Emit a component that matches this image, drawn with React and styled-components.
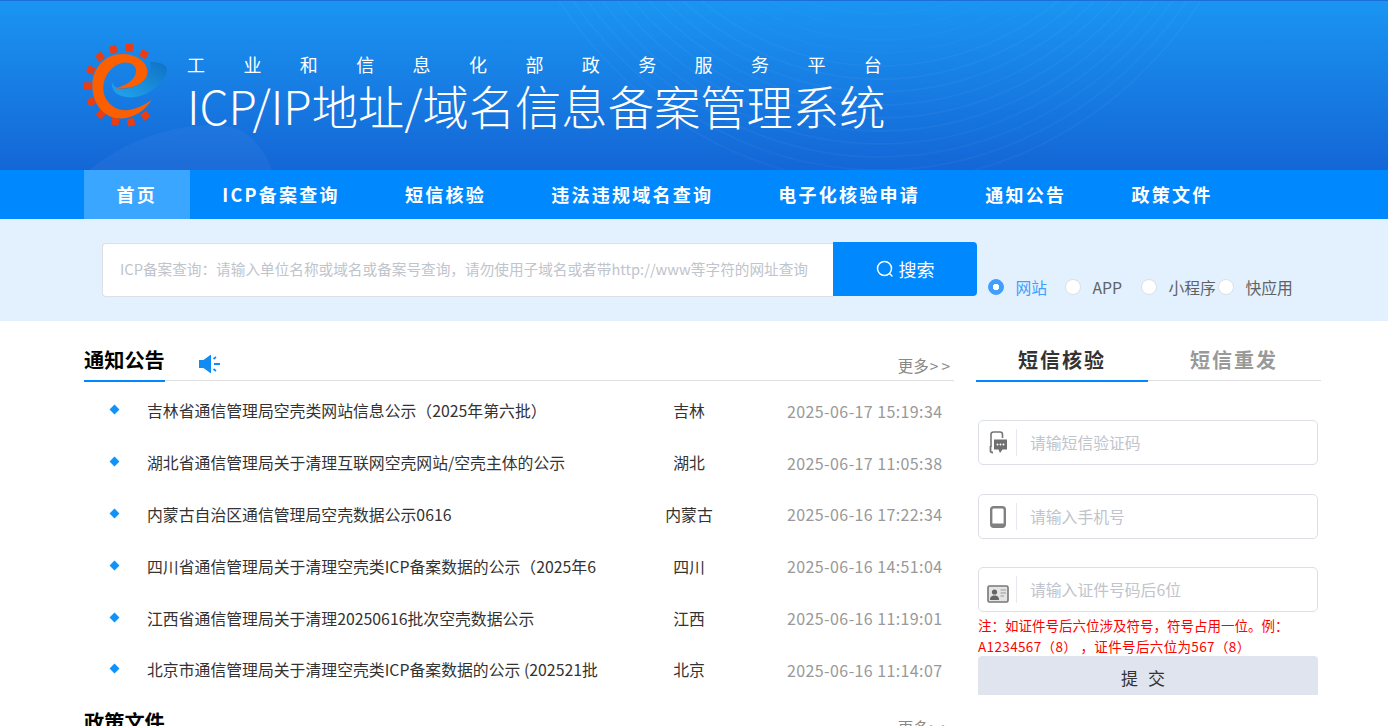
import React from "react";
import styled, { createGlobalStyle } from "styled-components";

const FONT = `"Noto Sans CJK SC", "Noto Sans", "Liberation Sans", sans-serif`;

const GlobalStyle = createGlobalStyle`
  html, body {
    margin: 0;
    height: 726px;
    overflow: hidden;
    background: #fff;
    font-family: ${FONT};
  }
  * { box-sizing: border-box; }
`;

const navItems = ["首页", "ICP备案查询", "短信核验", "违法违规域名查询", "电子化核验申请", "通知公告", "政策文件"];

const notices = [
  { title: "吉林省通信管理局空壳类网站信息公示（2025年第六批）", region: "吉林", date: "2025-06-17 15:19:34" },
  { title: "湖北省通信管理局关于清理互联网空壳网站/空壳主体的公示", region: "湖北", date: "2025-06-17 11:05:38" },
  { title: "内蒙古自治区通信管理局空壳数据公示0616", region: "内蒙古", date: "2025-06-16 17:22:34" },
  { title: "四川省通信管理局关于清理空壳类ICP备案数据的公示（2025年6", region: "四川", date: "2025-06-16 14:51:04" },
  { title: "江西省通信管理局关于清理20250616批次空壳数据公示", region: "江西", date: "2025-06-16 11:19:01" },
  { title: "北京市通信管理局关于清理空壳类ICP备案数据的公示 (202521批", region: "北京", date: "2025-06-16 11:14:07" },
];

const radios = [
  { label: "网站", width: 77, checked: true },
  { label: "APP", width: 76 },
  { label: "小程序", width: 77 },
  { label: "快应用", width: 80 },
];

const gearTeeth = [
  [160, 88, -15], [208, 83, 5], [252, 103, 28], [120, 110, -35], [92, 150, -65], [82, 198, 90],
  [94, 245, 68], [123, 283, 40], [166, 305, 12], [213, 307, -10], [256, 287, -32],
];

const Page = styled.div`
  width: 1388px;
  height: 726px;
  overflow: hidden;
`;

const Banner = styled.header`
  position: relative;
  height: 170px;
  padding: 44px 0 0 84px;
  display: flex;
  overflow: hidden;
  border-top: 1px solid #1b6fdc;
  background: linear-gradient(180deg, #1a95f2 0%, #1466d6 100%);
`;

const BannerArt = styled.svg`
  position: absolute;
  left: 0;
  top: 0;
`;

const LogoMark = styled.svg`
  position: relative;
  flex: none;
  margin-top: -1px;
`;

const BannerText = styled.div`
  position: relative;
  margin-left: 19px;
  color: #fff;
`;

const Kicker = styled.div`
  margin-top: 6px;
  font-size: 18px;
  line-height: 26px;
  letter-spacing: 38.4px;
  white-space: nowrap;
`;

const SiteTitle = styled.h1`
  margin: 0;
  font-size: 46.3px;
  font-weight: 300;
  line-height: 56px;
  white-space: nowrap;
`;

const NavBar = styled.nav`
  height: 49px;
  padding-left: 84px;
  display: flex;
  background: #0088ff;
`;

const NavItem = styled.a`
  padding: 0 32.6px;
  font-size: 18px;
  font-weight: 700;
  line-height: 49px;
  letter-spacing: 2.25px;
  color: #fff;
  white-space: nowrap;
  background: ${(p) => (p.$active ? "#3ba6ff" : "transparent")};
`;

const SearchBand = styled.section`
  height: 102px;
  padding: 23px 0 0 102px;
  display: flex;
  background: #e3f1fe;
`;

const SearchInput = styled.div`
  width: 731px;
  height: 54px;
  margin-top: 1px;
  padding-left: 17px;
  font-size: 14.65px;
  line-height: 50px;
  color: #c0c4cc;
  white-space: nowrap;
  background: #fff;
  border: 1px solid #dcdfe6;
  border-right: 0;
  border-radius: 4px 0 0 4px;
`;

const SearchButton = styled.button`
  width: 144px;
  height: 54px;
  padding: 0;
  display: flex;
  align-items: center;
  justify-content: center;
  gap: 5px;
  font-family: inherit;
  font-size: 18px;
  color: #fff;
  background: #0088ff;
  border: 0;
  border-radius: 0 4px 4px 0;
`;

const RadioGroup = styled.div`
  height: 30px;
  margin: 30px 0 0 11px;
  display: flex;
  align-items: center;
`;

const RadioOption = styled.label`
  display: flex;
  align-items: center;
  gap: 11.5px;
  font-size: 15.8px;
  color: ${(p) => (p.$checked ? "#409eff" : "#606266")};
  white-space: nowrap;
`;

const RadioDot = styled.span`
  width: 16px;
  height: 16px;
  flex: none;
  border-radius: 50%;
  border: 1px solid ${(p) => (p.$checked ? "#409eff" : "#dcdfe6")};
  background: ${(p) => (p.$checked
    ? "radial-gradient(circle, #fff 0 3px, #409eff 3.5px)"
    : "#fff")};
`;

const Content = styled.main`
  padding: 26px 0 0 84px;
  display: flex;
  gap: 22px;
`;

const LeftColumn = styled.div`
  width: 870px;
  flex: none;
`;

const SectionHead = styled.div`
  height: 34px;
  display: flex;
  align-items: flex-start;
  border-bottom: 1px solid #dfdfdf;
`;

const SectionTitle = styled.h2`
  height: 35px;
  margin: 0;
  font-size: 20.2px;
  font-weight: 700;
  line-height: 26px;
  color: #000;
  border-bottom: ${(p) => (p.$underlined ? "2px solid #0088ff" : "0")};
`;

const Speaker = styled.svg`
  margin: 7px 0 0 34px;
`;

const MoreLink = styled.a`
  margin: 8px 1px 0 auto;
  font-size: 15.5px;
  line-height: 20px;
  color: #888;
`;

const MoreArrows = styled.span`
  margin-left: 1px;
  letter-spacing: 3px;
`;

const NoticeList = styled.ul`
  margin: 4px 0 0;
  padding: 0;
  list-style: none;
`;

const NoticeRow = styled.li`
  height: 51.8px;
  padding-left: 26px;
  display: flex;
  align-items: center;
  font-size: 15.85px;
  color: #333;
`;

const Diamond = styled.i`
  width: 7px;
  height: 7px;
  margin: -2px 29px 0 1px;
  flex: none;
  background: #0f93fb;
  transform: rotate(45deg);
`;

const NoticeTitle = styled.span`
  width: 462px;
  flex: none;
  overflow: hidden;
  white-space: nowrap;
`;

const NoticeRegion = styled.span`
  width: 160px;
  flex: none;
  text-align: center;
`;

const NoticeDate = styled.span`
  margin-left: 18px;
  font-size: 16px;
  letter-spacing: 0.4px;
  color: #999;
  white-space: nowrap;
`;

const NextSection = styled.div`
  margin-top: 13px;
`;

const RightColumn = styled.aside`
  width: 345px;
  flex: none;
`;

const Tabs = styled.div`
  height: 34px;
  display: flex;
  border-bottom: 1px solid #dfdfdf;
`;

const Tab = styled.div`
  width: 172px;
  height: 35px;
  text-align: center;
  font-size: 20px;
  font-weight: 700;
  line-height: 26px;
  letter-spacing: 2px;
  color: ${(p) => (p.$active ? "#333" : "#999")};
  border-bottom: ${(p) => (p.$active ? "2px solid #0088ff" : "0")};
`;

const Form = styled.form`
  padding: 39px 0 0 2px;
  display: flex;
  flex-direction: column;
`;

const Field = styled.div`
  width: 340px;
  height: 45px;
  margin-bottom: ${(p) => p.$gap}px;
  display: flex;
  align-items: center;
  background: #fff;
  border: 1px solid #dcdfe6;
  border-radius: 5px;
`;

const FieldIcon = styled.span`
  width: 38px;
  height: 27px;
  flex: none;
  display: flex;
  align-items: ${(p) => p.$align || "center"};
  justify-content: center;
  border-right: 1px solid #e6e8ee;
`;

const FieldText = styled.span`
  padding-left: 13px;
  font-size: 15.8px;
  color: #c0c4cc;
`;

const Note = styled.p`
  margin: 0 0 -1px;
  font-size: 13.5px;
  line-height: 21px;
  color: #f00;
`;

const NoteExample = styled.span`
  letter-spacing: 0.36px;
`;

const SubmitButton = styled.button`
  width: 340px;
  height: 39px;
  padding: 3px 0 0;
  font-family: inherit;
  font-size: 17px;
  letter-spacing: 10px;
  color: #333;
  background: #e0e4ef;
  border: 0;
  border-radius: 4px 4px 0 0;
`;

const Logo = () => (
  <LogoMark width="84" height="84" viewBox="72 72 252 252">
    <defs>
      <linearGradient id="swoosh" x1="0" y1="1" x2="1" y2="0">
        <stop offset="0" stopColor="#22a5ee" />
        <stop offset="1" stopColor="#0f71c4" />
      </linearGradient>
    </defs>
    {gearTeeth.map(([x, y, r]) => (
      <rect key={`${x}-${y}`} x={x - 11} y={y - 11} width="22" height="22" fill="#ec3c12" transform={`rotate(${r} ${x} ${y})`} />
    ))}
    <path d="M268 125C300 125 326 135 320 155C312 190 260 235 205 232C175 230 152 215 156 185C165 215 205 212 240 190C265 172 280 145 268 125Z" fill="url(#swoosh)" />
    <path d="M275 240C250 280 210 298 175 295C125 290 97 245 97 197C97 140 140 100 190 102C235 104 265 130 262 160C258 190 215 210 165 205C185 200 225 185 228 155C230 135 210 125 190 128C160 132 130 165 130 205C130 245 165 275 205 270C235 266 260 250 275 240Z" fill="#fb5f00" />
  </LogoMark>
);

const SearchIcon = () => (
  <svg width="18" height="18" viewBox="0 0 18 18" fill="none" stroke="#fff" strokeWidth="1.5">
    <circle cx="8.5" cy="8.5" r="7" />
    <path d="M13.5 13.5L16 16" strokeLinecap="round" />
  </svg>
);

const SmsIcon = () => (
  <svg width="20" height="24" viewBox="0 0 20 24">
    <path d="M3 16V3.5C3 2 4 1 5.5 1H12C13.5 1 14.5 2 14.5 3.5V7" fill="none" stroke="#777" strokeWidth="1.6" />
    <path d="M2.5 15V20C2.5 21 3.5 21.5 5 21.5" fill="none" stroke="#777" strokeWidth="1.8" />
    <path d="M6 8.5H19V18.5H14.5L12 22L10.5 18.5H6Z" fill="#6f6f6f" />
    <circle cx="9.5" cy="13.5" r="1" fill="#fff" />
    <circle cx="12.5" cy="13.5" r="1" fill="#fff" />
    <circle cx="15.5" cy="13.5" r="1" fill="#fff" />
  </svg>
);

const PhoneIcon = () => (
  <svg width="16" height="22" viewBox="0 0 16 22">
    <rect x="1.2" y="1.2" width="13.6" height="19.6" rx="2.5" fill="none" stroke="#808080" strokeWidth="2.4" />
    <rect x="1" y="17.5" width="14" height="3" fill="#808080" />
  </svg>
);

const CardIcon = () => (
  <svg width="22" height="18" viewBox="0 0 22 18">
    <rect x="1" y="1" width="20" height="16" rx="1.5" fill="#e4e4e4" stroke="#777" strokeWidth="1.6" />
    <circle cx="7.5" cy="7" r="2.6" fill="#666" />
    <path d="M3 15C3 11.5 5 10.5 7.5 10.5C10 10.5 12 11.5 12 15Z" fill="#666" />
    <path d="M13.5 5H19M13.5 8H19M13.5 11H17" stroke="#999" strokeWidth="1" />
  </svg>
);

export default function App() {
  return (
    <Page>
      <GlobalStyle />
      <Banner>
        <BannerArt width="1388" height="170" viewBox="0 0 1388 170" fill="none">
          <path d="M88 170C130 135 190 118 232 126C252 132 266 150 272 170Z" fill="#fff" opacity="0.04" />
          {Array.from({ length: 30 }, (_, i) => (
            <ellipse key={i} cx="880" cy="-270" rx={400 - i * 11} ry={452 - i * 13} stroke="#fff" strokeOpacity={i < 10 ? 0.035 : 0.02} strokeWidth="1.8" />
          ))}
        </BannerArt>
        <Logo />
        <BannerText>
          <Kicker>工业和信息化部政务服务平台</Kicker>
          <SiteTitle>ICP/IP地址/域名信息备案管理系统</SiteTitle>
        </BannerText>
      </Banner>

      <NavBar>
        {navItems.map((item, i) => (
          <NavItem key={item} $active={i === 0}>{item}</NavItem>
        ))}
      </NavBar>

      <SearchBand>
        <SearchInput>ICP备案查询：请输入单位名称或域名或备案号查询，请勿使用子域名或者带http://www等字符的网址查询</SearchInput>
        <SearchButton type="button"><SearchIcon />搜索</SearchButton>
        <RadioGroup>
          {radios.map((r) => (
            <RadioOption key={r.label} $checked={r.checked} style={{ width: r.width }}>
              <RadioDot $checked={r.checked} />
              {r.label}
            </RadioOption>
          ))}
        </RadioGroup>
      </SearchBand>

      <Content>
        <LeftColumn>
          <SectionHead>
            <SectionTitle $underlined>通知公告</SectionTitle>
            <Speaker width="21" height="20" viewBox="0 0 21 20">
              <path d="M0 6H4.5L12 .5V19.5L4.5 14H0Z" fill="#0f8cf5" />
              <path d="M14.5 5L17 3M15 10H21M14.5 15L17 17" stroke="#0f8cf5" strokeWidth="1.8" fill="none" />
            </Speaker>
            <MoreLink>更多<MoreArrows>&gt;&gt;</MoreArrows></MoreLink>
          </SectionHead>
          <NoticeList>
            {notices.map((n) => (
              <NoticeRow key={n.title}>
                <Diamond />
                <NoticeTitle>{n.title}</NoticeTitle>
                <NoticeRegion>{n.region}</NoticeRegion>
                <NoticeDate>{n.date}</NoticeDate>
              </NoticeRow>
            ))}
          </NoticeList>
          <NextSection>
            <SectionHead>
              <SectionTitle>政策文件</SectionTitle>
              <MoreLink>更多<MoreArrows>&gt;&gt;</MoreArrows></MoreLink>
            </SectionHead>
          </NextSection>
        </LeftColumn>

        <RightColumn>
          <Tabs>
            <Tab $active>短信核验</Tab>
            <Tab>短信重发</Tab>
          </Tabs>
          <Form>
            <Field $gap={29}>
              <FieldIcon><SmsIcon /></FieldIcon>
              <FieldText>请输短信验证码</FieldText>
            </Field>
            <Field $gap={28}>
              <FieldIcon><PhoneIcon /></FieldIcon>
              <FieldText>请输入手机号</FieldText>
            </Field>
            <Field $gap={3}>
              <FieldIcon $align="flex-end"><CardIcon /></FieldIcon>
              <FieldText>请输入证件号码后6位</FieldText>
            </Field>
            <Note>注：如证件号后六位涉及符号，符号占用一位。例：<br /><NoteExample>A1234567（8） ，证件号后六位为567（8）</NoteExample></Note>
            <SubmitButton type="button">提交</SubmitButton>
          </Form>
        </RightColumn>
      </Content>
    </Page>
  );
}
